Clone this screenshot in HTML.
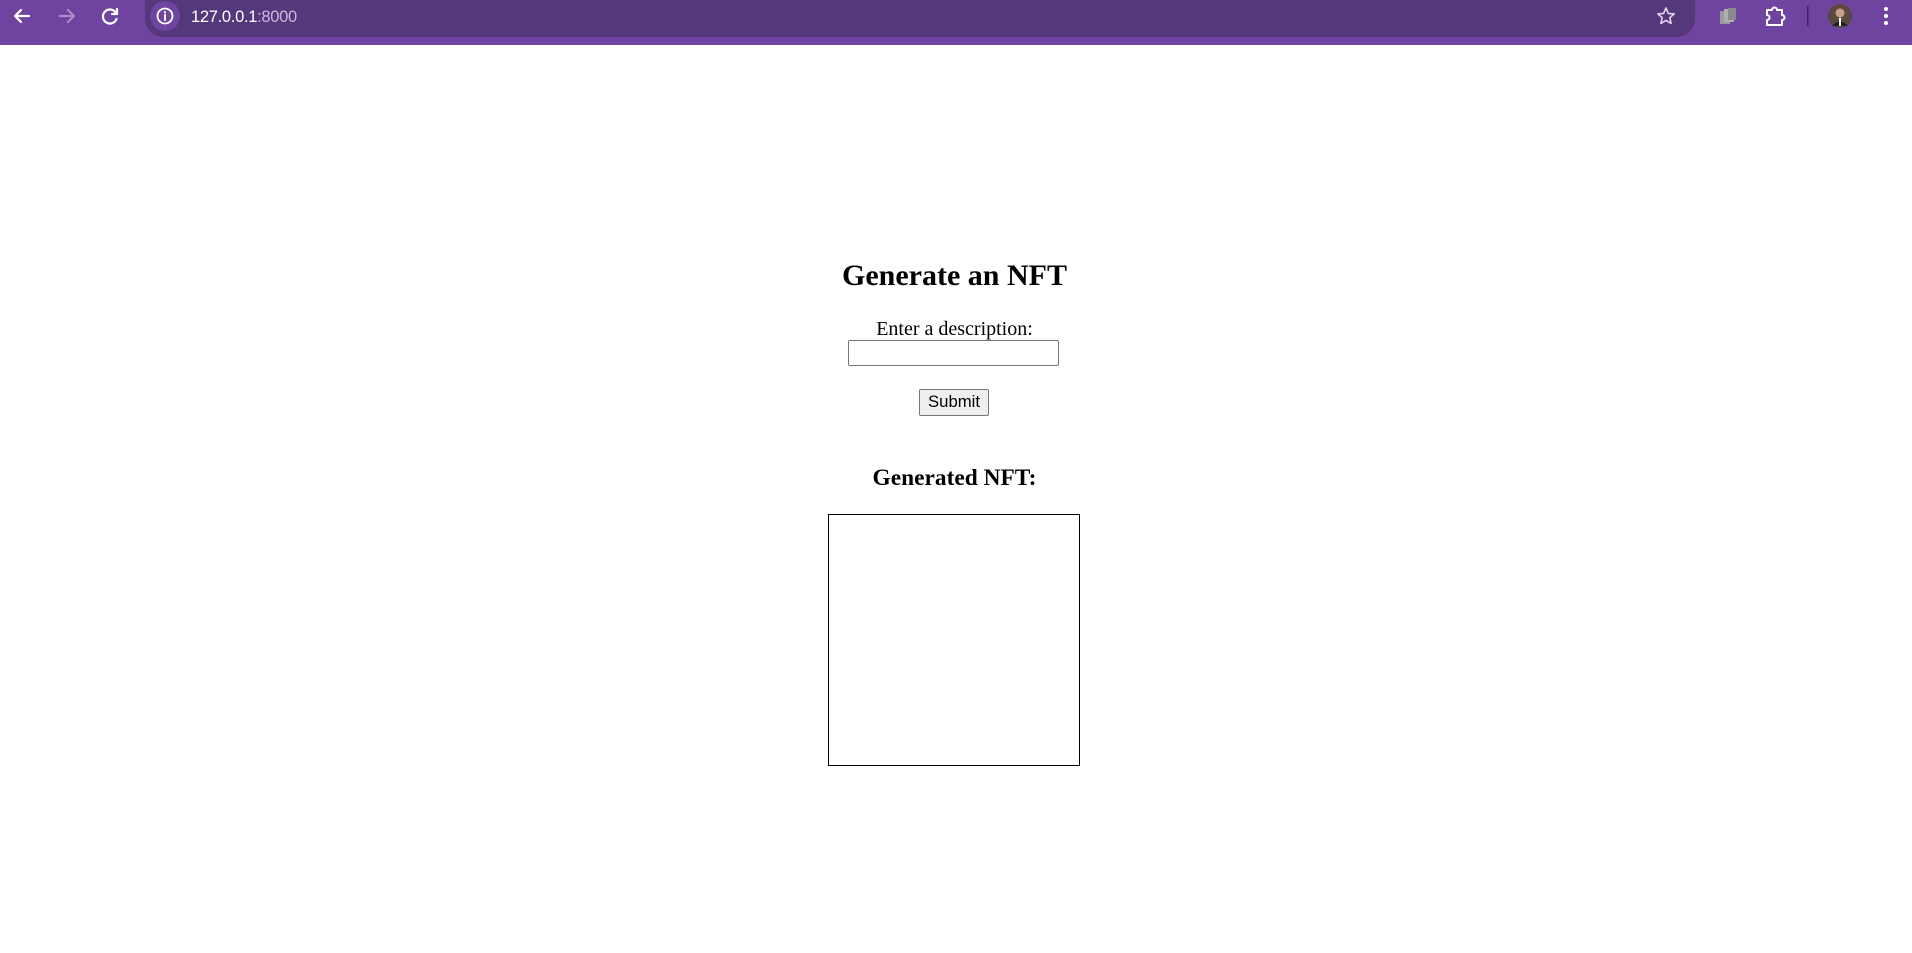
<!DOCTYPE html>
<html><head><meta charset="utf-8"><style>
*{margin:0;padding:0;box-sizing:border-box}
body{width:1912px;height:953px;background:#fff;position:relative;overflow:hidden;font-family:"Liberation Serif",serif}
.bar{position:absolute;left:0;top:0;width:1912px;height:45px;background:#6e44a0}
.addr{position:absolute;left:145px;top:0;width:1550px;height:37px;background:#55377c;border-radius:0 0 18px 18px}
.abs{position:absolute}
.c{position:absolute;left:0;width:1909px;text-align:center;color:#000}
</style></head><body>
<div class="bar"></div>
<div class="addr"></div>
<svg class="abs" style="left:0;top:0" width="1912" height="45">
 <g stroke="#fff" stroke-width="2.2" fill="none" stroke-linecap="round" stroke-linejoin="round">
  <path d="M29 16H15M21 10l-6 6 6 6"/>
  <path d="M60 16h14M68 10l6 6-6 6" stroke="#a98bcb"/>
  <path d="M116 13a7 7 0 1 0 0.5 6" /><path d="M117 9v5h-5"/>
 </g>
 <circle cx="165" cy="16" r="15" fill="#6e44a0"/>
 <circle cx="165" cy="16" r="7.5" fill="none" stroke="#fff" stroke-width="1.8"/>
 <path d="M165 15v5M165 12v0.5" stroke="#fff" stroke-width="2" stroke-linecap="round"/>
 <path d="M1666 8l2.4 5.4 5.8.5-4.4 3.8 1.3 5.7-5.1-3-5.1 3 1.3-5.7-4.4-3.8 5.8-.5z" fill="none" stroke="#e0d6ec" stroke-width="1.6" stroke-linejoin="round"/>
 <rect x="1720" y="11" width="10" height="13" fill="#9a9a9a"/><rect x="1724" y="9" width="10" height="13" fill="#b0b0b0"/><rect x="1728" y="8" width="8" height="12" fill="#8a8a8a"/>
 <path d="M1767 10h5a2.5 2.5 0 0 1 5 0h5v5a2.5 2.5 0 0 1 0 5v5h-15v-5a2.5 2.5 0 0 0 0-5z" fill="none" stroke="#fff" stroke-width="2" stroke-linejoin="round"/>
 <rect x="1807" y="6" width="1.5" height="20" fill="#3d2460"/>
 <circle cx="1840" cy="16" r="12" fill="#5a4a40"/><circle cx="1840" cy="13" r="4.5" fill="#c8a08a"/><path d="M1832 26q8-9 16 0" fill="#222"/><rect x="1839" y="18" width="2" height="8" fill="#fff"/>
 <g fill="#fff"><circle cx="1886" cy="9" r="2"/><circle cx="1886" cy="16" r="2"/><circle cx="1886" cy="23" r="2"/></g>
</svg>
<div class="abs" style="left:191px;top:7px;font:16.5px 'Liberation Sans',sans-serif;color:#fff;line-height:20px;letter-spacing:-0.3px">127.0.0.1<span style="color:#c9b8dd">:8000</span></div>

<div class="c" style="top:259px;font-size:30px;font-weight:bold;line-height:34px">Generate an NFT</div>
<div class="c" style="top:318px;font-size:20px;line-height:23px">Enter a description:</div>
<div class="abs" style="left:848px;top:340px;width:211px;height:26px;border:1px solid #767676;border-radius:2px"></div>
<div class="abs" style="left:919px;top:389px;width:70px;height:27px;border:1px solid #767676;border-radius:2px;background:#efefef;font:16.7px 'Liberation Sans',sans-serif;text-align:center;line-height:24px">Submit</div>
<div class="c" style="top:464px;font-size:23.4px;font-weight:bold;line-height:28px">Generated NFT:</div>
<div class="abs" style="left:828px;top:514px;width:252px;height:252px;border:1.5px solid #000"></div>
</body></html>
